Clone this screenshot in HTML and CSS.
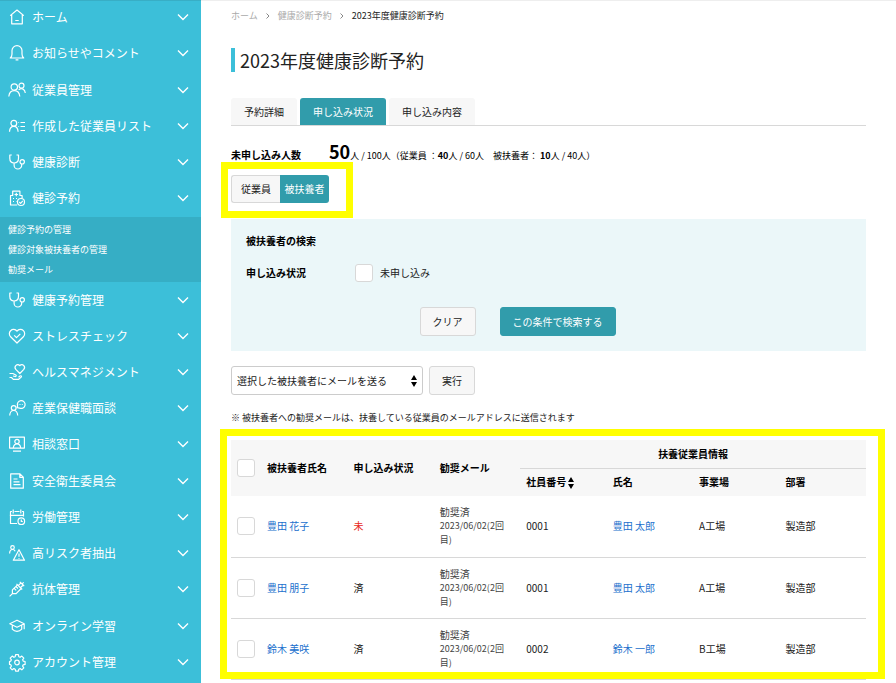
FILE: index.html
```html
<!DOCTYPE html>
<html lang="ja">

<head>
    <meta charset="UTF-8">
    <meta name="viewport" content="width=device-width, initial-scale=1">
    <title>2023年度健康診断予約</title>
    <link rel="stylesheet" href="styles.css">
</head>

<body>
    <svg class="sprite" aria-hidden="true">
        <symbol id="chevron" viewBox="0 0 12 8"><path d="M1 1.5l5 5 5-5" /></symbol>
        <symbol id="stethoscope" viewBox="0 0 16 16">
            <path d="M2.800 1H.8v3.300c0 2.800 1.700 4.700 4.300 4.700s4.400-1.900 4.400-4.700V1h-2M5.100 9v2.200a3.800 3.800 0 0 0 7.600 0V10" />
            <circle cx="13.200" cy="7.800" r="2.200" />
        </symbol>
        <symbol id="sort" viewBox="0 0 6 12"><path d="M3 0l3 5H0zM3 12l3-5H0z" /></symbol>
    </svg>

    <div class="layout">
        <nav class="sidebar">
            <button type="button" class="menu-item">
                <svg class="icon" viewBox="0 0 16 16"><path d="M1.2 6.6L8 1l6.8 5.6M2.7 5.6v9.2h10.6V5.6M6.3 11.5h3.4" /></svg>
                <span>ホーム</span><svg class="chevron"><use href="#chevron" /></svg>
            </button>
            <button type="button" class="menu-item">
                <svg class="icon" viewBox="0 0 16 16"><path d="M1.3 13h13.4c-1.3-1.1-1.7-2.2-1.7-4V5.6a5 5 0 0 0-10 0V9c0 1.800-.4 2.900-1.700 4zM6.600 14.900h2.800" /></svg>
                <span>お知らせやコメント</span><svg class="chevron"><use href="#chevron" /></svg>
            </button>
            <button type="button" class="menu-item">
                <svg class="icon icon-wide" viewBox="0 0 18 16"><circle cx="6.300" cy="5" r="3.200" /><circle cx="13.500" cy="3.700" r="2.500" /><path d="M.8 14.500c.4-3.600 2-5.800 5.500-5.800s5.100 2.200 5.500 5.800M10.600 7.800c3.500-2.300 6.300-.5 6.700 3.200" /></svg>
                <span>従業員管理</span><svg class="chevron"><use href="#chevron" /></svg>
            </button>
            <button type="button" class="menu-item">
                <svg class="icon" viewBox="0 0 16 16"><circle cx="4.800" cy="5.300" r="2.900" /><path d="M.5 13.700c.2-3.300 1.500-5.300 4.300-5.300s4.100 2 4.300 5.300M11.500 4.500H16M11.500 8.500H16M11.500 12.500H16M9.400 4.500h.7M9.400 8.500h.7" /></svg>
                <span>作成した従業員リスト</span><svg class="chevron"><use href="#chevron" /></svg>
            </button>
            <button type="button" class="menu-item">
                <svg class="icon"><use href="#stethoscope" /></svg>
                <span>健康診断</span><svg class="chevron"><use href="#chevron" /></svg>
            </button>
            <button type="button" class="menu-item" aria-expanded="true">
                <svg class="icon" viewBox="0 0 16 16"><path d="M8.200 15H1.500V5.500h2.200V1.200h7.200v4.300h2.200v2.800M7.300 2.700v3.600M5.500 4.500h3.600M4 8.500h1M7 8.500h1M4 11.500h1M7 11.500h.5" /><circle cx="12" cy="12" r="3.500" /><path d="M10.300 12l1.300 1.300 2.200-2.500" /></svg>
                <span>健診予約</span><svg class="chevron"><use href="#chevron" /></svg>
            </button>
            <div class="submenu">
                <a href="#">健診予約の管理</a>
                <a href="#">健診対象被扶養者の管理</a>
                <a href="#">勧奨メール</a>
            </div>
            <button type="button" class="menu-item">
                <svg class="icon"><use href="#stethoscope" /></svg>
                <span>健康予約管理</span><svg class="chevron"><use href="#chevron" /></svg>
            </button>
            <button type="button" class="menu-item">
                <svg class="icon" viewBox="0 0 16 16"><path d="M8 15L1.600 8.700a4.200 4.200 0 0 1 0-6C3.500.8 6.300 1 8 3.200 9.700 1 12.500.8 14.400 2.700a4.200 4.200 0 0 1 0 6zM5.200 7.400l2.300 2.300 3.800-3.900" /></svg>
                <span>ストレスチェック</span><svg class="chevron"><use href="#chevron" /></svg>
            </button>
            <button type="button" class="menu-item">
                <svg class="icon" viewBox="0 0 16 16"><path d="M10.800 9.500L6.800 5.400c-2.300-3 1.500-6.500 4-3.700 2.500-2.800 6.300.7 4 3.700zM.5 9.500h3.300l3 1.500c.9.700.3 1.700-.7 1.500L4 12M.5 13.500h2l1.800 1.800h5.400l2.500-2.200c.8-1-.2-1.700-1.200-1.100L9.500 13.200" /></svg>
                <span>ヘルスマネジメント</span><svg class="chevron"><use href="#chevron" /></svg>
            </button>
            <button type="button" class="menu-item">
                <svg class="icon" viewBox="0 0 16 16"><circle cx="4.700" cy="8" r="2.400" /><path d="M.7 15.500c.2-3.100 1.400-5 4-5s3.800 1.900 4 5M8.200 7.700l.4-1.700a3.900 3.900 0 1 1 2 2.100zM9.800 4.500h.7M11.500 4.500h.7M13.200 4.500h.7" /></svg>
                <span>産業保健職面談</span><svg class="chevron"><use href="#chevron" /></svg>
            </button>
            <button type="button" class="menu-item">
                <svg class="icon" viewBox="0 0 16 16"><path d="M.6 1.200h14.800v10.900H.6zM4 15.200h8M4.300 12c.2-2.600 1.400-4.200 3.700-4.200s3.500 1.600 3.700 4.200" /><circle cx="8" cy="5.500" r="2.200" /></svg>
                <span>相談窓口</span><svg class="chevron"><use href="#chevron" /></svg>
            </button>
            <button type="button" class="menu-item">
                <svg class="icon" viewBox="0 0 16 16"><path d="M1.700.8h9.300l3.300 3.300v11.100H1.700zM10.800.8v3.500h3.500M4.500 6h4M4.500 8.800h6M4.500 11.600h7" /></svg>
                <span>安全衛生委員会</span><svg class="chevron"><use href="#chevron" /></svg>
            </button>
            <button type="button" class="menu-item">
                <svg class="icon" viewBox="0 0 16 16"><path d="M8 14.500H1.500v-12H3M5.500 2.500h5M13 2.500h1.500v5M.8 6.300h13.700M4.200.5v4M11.800.5v4M12.300 10.500v2h1.500" /><circle cx="12.300" cy="12.200" r="3.300" /></svg>
                <span>労働管理</span><svg class="chevron"><use href="#chevron" /></svg>
            </button>
            <button type="button" class="menu-item">
                <svg class="icon" viewBox="0 0 16 16"><circle cx="3.500" cy="2.500" r="1.800" /><path d="M.6 8.500c.1-2.600 1-4 2.900-4 1.300 0 2.200.6 2.600 1.800M10 4.700l5.500 10.500H4.300zM10 8.500v3.300M10 13v.8" /></svg>
                <span>高リスク者抽出</span><svg class="chevron"><use href="#chevron" /></svg>
            </button>
            <button type="button" class="menu-item">
                <svg class="icon" viewBox="0 0 16 16"><path d="M.6 15.400l3.600-3.600M7.500 2.800l5.700 5.700M8.500 3.800L3.400 8.900v3.700h3.700l5.100-5.100M9.500 4.300L12 1.800l2.200 2.200-2.500 2.500M10.800.8l4.400 4.400M13.300 2.700l1.400-1.400M5.200 7.300l2 2M7 5.500l2 2" /></svg>
                <span>抗体管理</span><svg class="chevron"><use href="#chevron" /></svg>
            </button>
            <button type="button" class="menu-item">
                <svg class="icon" viewBox="0 0 16 16"><path d="M.8 5.700L8 2.200l7.200 3.500L8 9.200zM3.300 7v4.200c2.500 3 6.900 3 9.400 0V7M15.200 5.700v5.500" /></svg>
                <span>オンライン学習</span><svg class="chevron"><use href="#chevron" /></svg>
            </button>
            <button type="button" class="menu-item">
                <svg class="icon" viewBox="0 0 16 16"><path d="M6.600.7h2.800l.4 2 1.300.6 1.700-1.200 2 2-1.200 1.700.6 1.300 1.900.4v2.900l-1.900.4-.6 1.300 1.200 1.700-2 2-1.700-1.200-1.300.6-.4 2H6.600l-.4-2-1.300-.6-1.700 1.200-2-2 1.200-1.700-.6-1.300-1.300-.4V7.500l1.300-.4.600-1.300-1.200-1.700 2-2 1.700 1.200 1.300-.6z" /><circle cx="8" cy="8.500" r="2.300" /></svg>
                <span>アカウント管理</span><svg class="chevron"><use href="#chevron" /></svg>
            </button>
        </nav>

        <main class="content">
            <div class="breadcrumb">
                <a href="#">ホーム</a>
                <svg class="crumb-arrow" viewBox="0 0 4 6"><path d="M.5.5L3 3 .5 5.500" /></svg>
                <a href="#">健康診断予約</a>
                <svg class="crumb-arrow" viewBox="0 0 4 6"><path d="M.5.5L3 3 .5 5.500" /></svg>
                <span>2023年度健康診断予約</span>
            </div>

            <h1>2023年度健康診断予約</h1>

            <div class="tabs">
                <button type="button" class="tab">予約詳細</button>
                <button type="button" class="tab active">申し込み状況</button>
                <button type="button" class="tab">申し込み内容</button>
            </div>

            <div class="summary">
                <strong class="summary-title">未申し込み人数</strong>
                <p><b class="count">50</b>人 / 100人（従業員 ：<b>40</b>人 / 60人　被扶養者： <b>10</b>人 / 40人）</p>
            </div>

            <div class="segment">
                <button type="button">従業員</button>
                <button type="button" class="active">被扶養者</button>
            </div>

            <form class="search">
                <h2>被扶養者の検索</h2>
                <div class="search-row">
                    <span class="search-label">申し込み状況</span>
                    <input type="checkbox" id="notApplied">
                    <label for="notApplied">未申し込み</label>
                </div>
                <div class="search-buttons">
                    <button type="reset" class="btn">クリア</button>
                    <button type="button" class="btn primary">この条件で検索する</button>
                </div>
            </form>

            <div class="actions">
                <div class="select">
                    <select aria-label="一括操作">
                        <option>選択した被扶養者にメールを送る</option>
                    </select>
                    <svg class="sort"><use href="#sort" /></svg>
                </div>
                <button type="button" class="btn">実行</button>
            </div>

            <p class="note">※ 被扶養者への勧奨メールは、扶養している従業員のメールアドレスに送信されます</p>

            <div class="list">
                <table>
                    <colgroup>
                        <col class="col-check">
                        <col span="7">
                    </colgroup>
                    <thead>
                        <tr>
                            <th rowspan="2"><input type="checkbox" aria-label="すべて選択"></th>
                            <th rowspan="2">被扶養者氏名</th>
                            <th rowspan="2">申し込み状況</th>
                            <th rowspan="2">勧奨メール</th>
                            <th colspan="4" class="group">扶養従業員情報</th>
                        </tr>
                        <tr>
                            <th>社員番号<svg class="sort"><use href="#sort" /></svg></th>
                            <th>氏名</th>
                            <th>事業場</th>
                            <th>部署</th>
                        </tr>
                    </thead>
                    <tbody>
                        <tr>
                            <td><input type="checkbox" aria-label="豊田 花子"></td>
                            <td><a href="#">豊田 花子</a></td>
                            <td class="pending">未</td>
                            <td class="mail">勧奨済<small>2023/06/02(2回目)</small></td>
                            <td>0001</td>
                            <td><a href="#">豊田 太郎</a></td>
                            <td>A工場</td>
                            <td>製造部</td>
                        </tr>
                        <tr>
                            <td><input type="checkbox" aria-label="豊田 朋子"></td>
                            <td><a href="#">豊田 朋子</a></td>
                            <td>済</td>
                            <td class="mail">勧奨済<small>2023/06/02(2回目)</small></td>
                            <td>0001</td>
                            <td><a href="#">豊田 太郎</a></td>
                            <td>A工場</td>
                            <td>製造部</td>
                        </tr>
                        <tr>
                            <td><input type="checkbox" aria-label="鈴木 美咲"></td>
                            <td><a href="#">鈴木 美咲</a></td>
                            <td>済</td>
                            <td class="mail">勧奨済<small>2023/06/02(2回目)</small></td>
                            <td>0002</td>
                            <td><a href="#">鈴木 一郎</a></td>
                            <td>B工場</td>
                            <td>製造部</td>
                        </tr>
                    </tbody>
                </table>
            </div>
        </main>
    </div>
</body>

</html>
```
FILE: styles.css
```css
* {
    box-sizing: border-box;
}

body {
    margin: 0;
    font-family: "Noto Sans CJK JP", sans-serif;
    font-size: 10px;
    line-height: 14px;
    color: #222;
    background: #fff;
}

button,
select {
    font: inherit;
    color: inherit;
}

button {
    cursor: pointer;
}

a {
    color: #2170cd;
    text-decoration: none;
}

h1,
h2,
p {
    margin: 0;
}

.sprite {
    position: absolute;
    width: 0;
    height: 0;
}

.layout {
    display: flex;
}

/* sidebar */
.sidebar {
    flex: 0 0 201px;
    display: flex;
    flex-direction: column;
    height: 100vh;
    padding-bottom: 2px;
    background: #3cbfd9;
    box-shadow: inset 0 1px #38aec5;
}

.menu-item {
    flex: 1;
    display: flex;
    align-items: center;
    gap: 7px;
    padding: 0 12px 2px 9px;
    border: none;
    background: none;
    color: #fff;
    font-size: 12px;
    text-align: left;
}

.icon {
    width: 16px;
    height: 16px;
    overflow: visible;
    fill: none;
    stroke: #fff;
    stroke-width: 1.2;
    stroke-linejoin: round;
}

.icon-wide {
    width: 18px;
    margin: 0 -1px;
}

.chevron {
    width: 12px;
    height: 8px;
    margin-left: auto;
    fill: none;
    stroke: #fff;
    stroke-width: 1.4;
}

.submenu {
    padding: 3px 8px 2px;
    background: #36aec5;
}

.submenu a {
    display: block;
    color: #fff;
    font-size: 9px;
    line-height: 20px;
}

/* content */
.content {
    flex: 1;
    min-width: 0;
    padding: 9px 30px 0;
    box-shadow: inset 0 1px #eee;
}

.breadcrumb {
    display: flex;
    align-items: center;
    gap: 8px;
    font-size: 9px;
}

.breadcrumb a {
    color: #aaa;
}

.crumb-arrow {
    width: 4px;
    height: 6px;
    fill: none;
    stroke: #888;
}

h1 {
    margin-top: 25px;
    padding-left: 5px;
    border-left: 4px solid #3cbfd9;
    font-size: 18px;
    font-weight: 400;
    line-height: 24px;
}

.tabs {
    display: flex;
    gap: 3px;
    margin-top: 26px;
    border-bottom: 1px solid #d8d8d8;
}

.tab {
    height: 27px;
    padding: 0 13px;
    border: none;
    border-radius: 3px 3px 0 0;
    background: #f7f7f7;
}

.tab.active {
    background: #319cab;
    color: #fff;
}

.summary {
    display: flex;
    align-items: baseline;
    gap: 28px;
    margin-top: 13px;
    line-height: 24px;
    color: #000;
}

.summary p {
    font-size: 9px;
}

.count {
    font-size: 18px;
}

/* yellow frame drawn around the parts to look at */
.segment,
.list {
    position: relative;
}

.segment::after,
.list::after {
    content: "";
    position: absolute;
    border: 7px solid #ff0;
    pointer-events: none;
}

.segment {
    display: flex;
    width: fit-content;
    margin-top: 7px;
}

.segment::after {
    inset: -13px -24px -15px -10px;
}

.segment button {
    width: 49px;
    height: 28px;
    padding: 0;
    border: 1px solid #d8d8d8;
    border-right: none;
    border-radius: 3px 0 0 3px;
    background: #f7f7f7;
}

.segment button.active {
    border: none;
    border-radius: 0 3px 3px 0;
    background: #319cab;
    color: #fff;
}

.search {
    margin-top: 16px;
    padding: 15px;
    background: #ebf7f9;
}

.search h2 {
    font-size: 10px;
    line-height: 14px;
    color: #000;
}

.search-row {
    display: flex;
    align-items: center;
    margin-top: 16px;
}

.search-label {
    width: 109px;
    font-weight: 700;
    color: #000;
}

.search-row label {
    margin-left: 7px;
}

.search-buttons {
    display: flex;
    justify-content: center;
    gap: 24px;
    margin-top: 25px;
    padding-right: 62px;
}

.btn {
    height: 29px;
    padding: 0 12px;
    border: 1px solid #d8d8d8;
    border-radius: 3px;
    background: #f7f7f7;
}

.btn.primary {
    border-color: #319cab;
    background: #319cab;
    color: #fff;
}

input[type="checkbox"] {
    display: block;
    appearance: none;
    width: 18px;
    height: 18px;
    margin: 0;
    border: 1px solid #d8d8d8;
    border-radius: 3px;
    background: #fff;
}

input[type="checkbox"]:checked {
    background: #319cab;
}

.actions {
    display: flex;
    gap: 6px;
    margin-top: 15px;
}

.select {
    position: relative;
}

.select select {
    appearance: none;
    width: 192px;
    height: 29px;
    padding: 0 20px 0 5px;
    border: 1px solid #ccc;
    border-radius: 3px;
    background: #fff;
}

.sort {
    width: 6px;
    height: 12px;
    fill: #000;
}

.select .sort {
    position: absolute;
    top: 9px;
    right: 6px;
    pointer-events: none;
}

.note {
    margin-top: 16px;
    font-size: 9px;
}

/* dependents table */
.list {
    margin-top: 15px;
}

.list::after {
    inset: -11px -19px 1px -11px;
}

table {
    width: 100%;
    table-layout: fixed;
    border-collapse: collapse;
}

.col-check {
    width: 30px;
}

th,
td {
    padding: 0 6px;
    text-align: left;
}

th {
    height: 28px;
    background: #f7f7f7;
    color: #000;
}

th .sort {
    margin-left: 2px;
    vertical-align: middle;
}

.group {
    border-bottom: 1px solid #d8d8d8;
    text-align: center;
}

td {
    height: 61px;
    border-bottom: 1px solid #d8d8d8;
}

td.pending {
    color: #e8291c;
}

td.mail {
    color: #444;
}

small {
    display: block;
    font-size: 9px;
}
```
